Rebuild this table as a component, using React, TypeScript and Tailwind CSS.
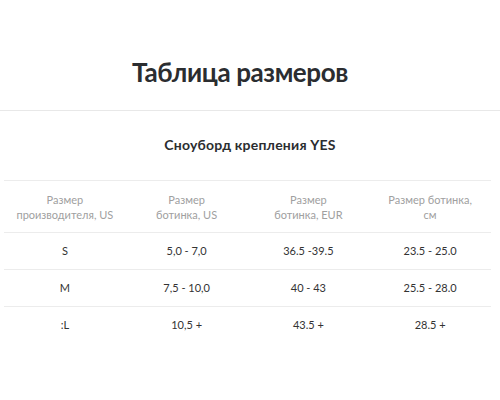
import React from "react";

const headers = [
  ["Размер", "производителя, US"],
  ["Размер", "ботинка, US"],
  ["Размер", "ботинка, EUR"],
  ["Размер ботинка,", "см"],
];

const rows = [
  ["S", "5,0 - 7,0", "36.5 -39.5", "23.5 - 25.0"],
  ["M", "7,5 - 10,0", "40 - 43", "25.5 - 28.0"],
  [":L", "10,5 +", "43.5 +", "28.5 +"],
];

const App = () => {
  return (
    <div className="w-[500px] h-[400px] bg-white font-['Lato',sans-serif] text-[#2b2d30]">
      <div className="h-[111px] border-b border-[#e8e8e8] flex items-center justify-center pt-[33px] pr-[20px]">
        <h1 className="text-[26px] font-bold leading-none tracking-[-0.4px]">Таблица размеров</h1>
      </div>

      <div className="h-[69px] flex items-center justify-center pb-[1px]">
        <h2 className="text-[14px] font-bold leading-none tracking-[0.2px]">Сноуборд крепления YES</h2>
      </div>

      <div className="mx-[4px] w-[487px]">
        <div className="grid grid-cols-4 h-[53px] border-t border-b border-[#ececec] items-center">
          {headers.map((h, i) => (
            <div key={i} className="text-center text-[11px] leading-[15px] text-[#a0a0a0]">
              <div>{h[0]}</div>
              <div>{h[1]}</div>
            </div>
          ))}
        </div>
        {rows.map((r, i) => (
          <div
            key={i}
            className={
              i < rows.length - 1
                ? "grid grid-cols-4 h-[37px] border-b border-[#ececec] items-center"
                : "grid grid-cols-4 h-[37px] items-center"
            }
          >
            {r.map((c, j) => (
              <div key={j} className="text-center text-[11px] text-[#333]">
                {c}
              </div>
            ))}
          </div>
        ))}
      </div>
    </div>
  );
};

export default App;
